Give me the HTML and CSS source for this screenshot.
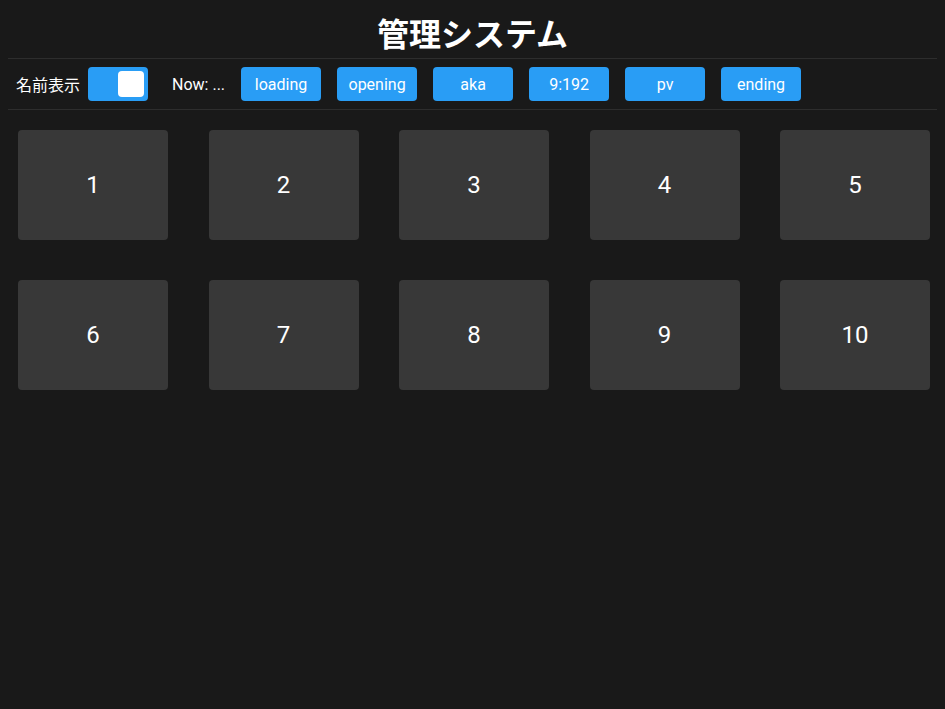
FILE: index.html
```html
<!DOCTYPE html>
<html lang="ja">
<head>
    <meta charset="UTF-8">
    <title>管理システム</title>
    <link rel="stylesheet" href="styles.css">
</head>
<body>
    <h1>管理システム</h1>

    <div class="toolbar">
        <span class="label">名前表示</span>
        <label class="switch">
            <input type="checkbox" checked>
            <span class="knob"></span>
        </label>
        <span class="now">Now: ...</span>
        <button class="scene">loading</button>
        <button class="scene">opening</button>
        <button class="scene">aka</button>
        <button class="scene">9:192</button>
        <button class="scene">pv</button>
        <button class="scene">ending</button>
    </div>

    <div class="grid">
        <div class="card">1</div>
        <div class="card">2</div>
        <div class="card">3</div>
        <div class="card">4</div>
        <div class="card">5</div>
        <div class="card">6</div>
        <div class="card">7</div>
        <div class="card">8</div>
        <div class="card">9</div>
        <div class="card">10</div>
    </div>
</body>
</html>
```

FILE: styles.css
```css
body {
    font-family: Roboto, "Noto Sans CJK JP", sans-serif;
    background-color: #191919;
    color: #fff;
    margin: 8px;
}

h1 {
    font-family: "Noto Sans CJK JP", sans-serif;
    font-size: 32px;
    font-weight: bold;
    line-height: 48px;
    text-align: center;
    margin: 0 0 2px;
}

.toolbar {
    display: flex;
    align-items: center;
    padding: 8px;
    border-top: 1px solid #2d2d2d;
    border-bottom: 1px solid #2d2d2d;
    font-size: 16px;
}

.label {
    font-family: "Noto Sans CJK JP", sans-serif;
    margin-right: 8px;
}

.switch {
    position: relative;
    display: inline-block;
    width: 60px;
    height: 34px;
    background-color: #299df5;
    border-radius: 4px;
    margin-right: 24px;
}

.switch input { display: none; }

.knob {
    position: absolute;
    top: 4px;
    right: 4px;
    width: 26px;
    height: 26px;
    background-color: #fff;
    border-radius: 4px;
}

.now { margin-right: 16px; }

.scene {
    width: 80px;
    height: 34px;
    margin-right: 16px;
    background-color: #299df5;
    color: #fff;
    border: none;
    border-radius: 4px;
    font-family: Roboto, sans-serif;
    font-size: 16px;
    padding: 0;
}

.grid {
    display: grid;
    grid-template-columns: repeat(5, 150px);
    justify-content: space-between;
    row-gap: 40px;
    padding: 20px 7px 0 10px;
}

.card {
    height: 110px;
    background-color: #383838;
    border-radius: 4px;
    display: flex;
    align-items: center;
    justify-content: center;
    font-size: 24px;
}
```
